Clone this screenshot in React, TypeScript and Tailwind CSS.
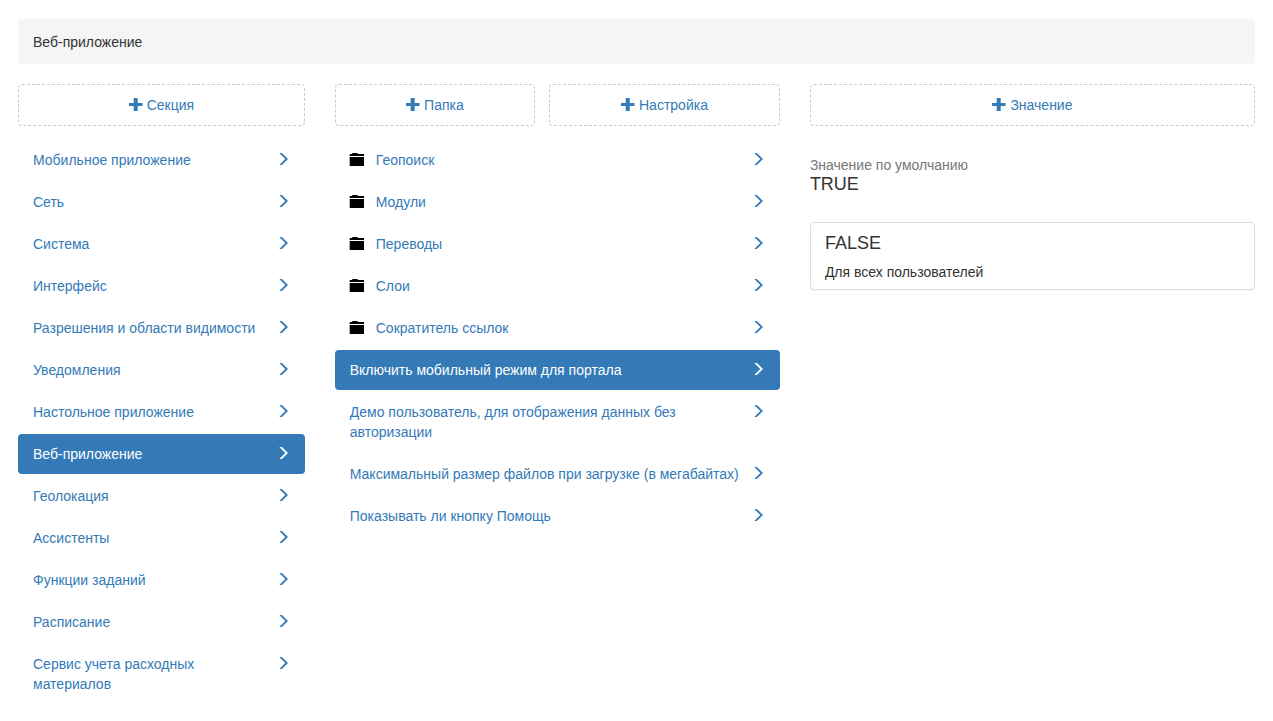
import React from 'react';

interface ListItem {
  title: string;
  folder?: boolean;
  active?: boolean;
}

const sections: ListItem[] = [
  { title: 'Мобильное приложение' },
  { title: 'Сеть' },
  { title: 'Система' },
  { title: 'Интерфейс' },
  { title: 'Разрешения и области видимости' },
  { title: 'Уведомления' },
  { title: 'Настольное приложение' },
  { title: 'Веб-приложение', active: true },
  { title: 'Геолокация' },
  { title: 'Ассистенты' },
  { title: 'Функции заданий' },
  { title: 'Расписание' },
  { title: 'Сервис учета расходных материалов' },
];

const settings: ListItem[] = [
  { title: 'Геопоиск', folder: true },
  { title: 'Модули', folder: true },
  { title: 'Переводы', folder: true },
  { title: 'Слои', folder: true },
  { title: 'Сократитель ссылок', folder: true },
  { title: 'Включить мобильный режим для портала', active: true },
  { title: 'Демо пользователь, для отображения данных без авторизации' },
  { title: 'Максимальный размер файлов при загрузке (в мегабайтах)' },
  { title: 'Показывать ли кнопку Помощь' },
];

const PlusIcon: React.FC = () => (
  <svg className="w-[14px] h-[14px] shrink-0" viewBox="0 0 14 14" fill="currentColor" aria-hidden="true">
    <path d="M4.700 0h4v5h4.800v3H8.700v5h-4V8H0V5h4.700z" />
  </svg>
);

const ChevronIcon: React.FC = () => (
  <svg className="w-[14px] h-[14px] mt-[2px] shrink-0" viewBox="0 0 14 14" fill="currentColor" aria-hidden="true">
    <path d="M3.300 1h2.600L12 7l-6.100 6H3.300l6-6z" />
  </svg>
);

const FolderIcon: React.FC = () => (
  <svg className="w-4 h-[14px] mt-[2px] -ml-px mr-[11px] shrink-0" viewBox="0 0 16 14" fill="#000" aria-hidden="true">
    <path d="M0.700 2H3l0.500-1h5L9 2h6v2H0.700z" />
    <path d="M0.700 5H15v9H0.700z" />
  </svg>
);

interface AddButtonProps {
  label: string;
  className: string;
}

const AddButton: React.FC<AddButtonProps> = ({ label, className }) => (
  <button
    type="button"
    className={`${className} flex items-center justify-center gap-1 py-[10px] border border-dashed border-[#ccc] rounded text-[#337ab7] cursor-pointer`}
  >
    <PlusIcon />
    {label}
  </button>
);

const NavList: React.FC<{ items: ListItem[] }> = ({ items }) => (
  <ul className="flex flex-col gap-[2px] mt-[14px]">
    {items.map((item) => (
      <li key={item.title}>
        <a
          href="#"
          className={`flex items-start px-[15px] py-[10px] rounded ${item.active ? 'bg-[#337ab7] text-white' : 'text-[#337ab7]'}`}
        >
          {item.folder && <FolderIcon />}
          <span className="flex-1">{item.title}</span>
          <ChevronIcon />
        </a>
      </li>
    ))}
  </ul>
);

export default function App() {
  return (
    <div className="px-[18px] py-[19px] bg-white text-[#333] text-[14px] leading-5 font-['Liberation_Sans',Arial,sans-serif]">
      {/* Breadcrumb */}
      <nav className="bg-[#f5f5f5] rounded px-[15px] pt-[13px] pb-3 mb-5">Веб-приложение</nav>

      <div className="flex items-start -mx-[15px]">
        {/* Sections */}
        <div className="w-1/4 px-[15px]">
          <AddButton label="Секция" className="w-full" />
          <NavList items={sections} />
        </div>

        {/* Folders and settings */}
        <div className="flex-1 px-[15px]">
          <div className="flex gap-[14px]">
            <AddButton label="Папка" className="w-[45%]" />
            <AddButton label="Настройка" className="flex-1" />
          </div>
          <NavList items={settings} />
        </div>

        {/* Values */}
        <div className="flex-1 px-[15px]">
          <AddButton label="Значение" className="w-full" />
          <div className="mt-[29px]">
            <div className="text-[#777]">Значение по умолчанию</div>
            <h4 className="text-[18px] leading-5 -mt-px">TRUE</h4>
          </div>
          <div className="mt-7 px-[14px] pt-[10px] pb-[7px] border border-[#ddd] rounded shadow-[0_1px_1px_rgba(0,0,0,0.05)]">
            <h4 className="text-[18px] leading-5">FALSE</h4>
            <p className="mt-[9px]">Для всех пользователей</p>
          </div>
        </div>
      </div>
    </div>
  );
}
